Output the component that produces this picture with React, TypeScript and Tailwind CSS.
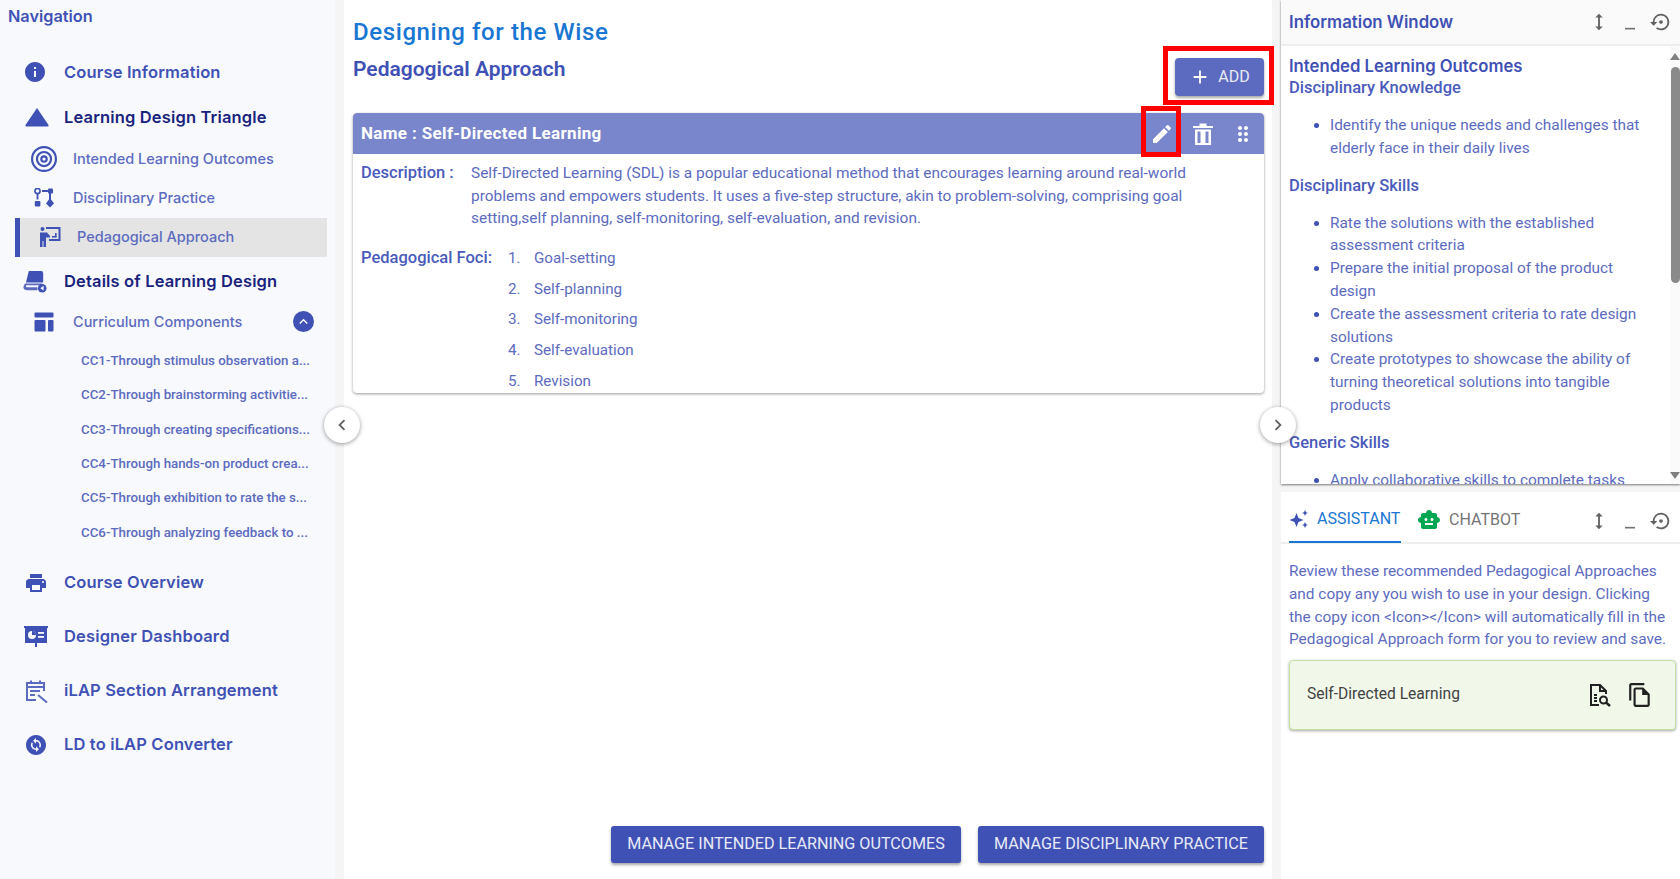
import {
  MdInfo,
  MdPrint,
  MdChangeCircle,
  MdEdit,
  MdDragIndicator,
  MdHeight,
  MdMinimize,
  MdSettingsBackupRestore,
  MdSmartToy,
  MdOutlineFileCopy,
  MdAdd,
  MdExpandLess,
  MdChevronLeft,
  MdChevronRight,
} from "react-icons/md";

const roboto = "font-['Roboto',sans-serif]";
const inter = "font-['Inter',sans-serif]";

function TriangleIcon() {
  return (
    <svg viewBox="0 0 24 20" className="w-6 h-5 fill-[#3f51b5]">
      <path d="M12 1 L23.5 18 Q24 19.5 22.5 19.5 H1.5 Q0 19.5 .5 18 Z" />
    </svg>
  );
}

function TargetIcon() {
  return (
    <svg viewBox="0 0 24 24" className="w-[26px] h-[26px] fill-none stroke-[#3f51b5]" strokeWidth="2">
      <circle cx="12" cy="12" r="11" />
      <circle cx="12" cy="12" r="6.5" />
      <circle cx="12" cy="12" r="2.5" />
    </svg>
  );
}

function PracticeIcon() {
  return (
    <svg viewBox="0 0 20 20" className="w-5 h-5 fill-[#3f51b5]">
      <circle cx="3.5" cy="3" r="2.6" fill="none" stroke="#3f51b5" strokeWidth="1.6" />
      <rect x="2.6" y="5.5" width="1.8" height="6" />
      <rect x="0.8" y="13" width="5.6" height="5.6" rx="1" />
      <rect x="8" y="2" width="8" height="2" />
      <rect x="14" y="0.5" width="5" height="5" rx="1" />
      <rect x="15" y="5" width="2" height="8" />
      <path d="M16 10 L20 15.5 L16 19.5 L12 15.5 Z" />
    </svg>
  );
}

function TeacherIcon() {
  return (
    <svg viewBox="0 0 22 22" className="w-[22px] h-[22px] fill-[#3f51b5]">
      <circle cx="3.5" cy="3" r="2" />
      <path d="M1 6.5 H8 L11 10 V11.5 H7 V21 H4.5 V15 H3.5 V21 H1 Z" />
      <path d="M7 1 H21.5 V15 H10 V13 H19.5 V3 H7 Z" />
      <rect x="13" y="10" width="4.5" height="1.6" />
      <rect x="16" y="7" width="1.6" height="4" />
    </svg>
  );
}

function BooksIcon() {
  return (
    <svg viewBox="0 0 26 24" className="w-[25px] h-[23px] fill-[#3f51b5]">
      <path d="M6 1 H19 Q21 1 21 3 V13 H3 Z" />
      <path d="M2 14 H20 V16 H4 Q3 16 3 17 Q3 18 4 18 H15 V21 H4 Q0 21 .5 17 Z" opacity="0.85" />
      <circle cx="20" cy="19" r="4.5" />
      <path d="M21.5 16.5 L18 19 L21.5 21.5 Z" fill="#f8f9fc" />
    </svg>
  );
}

function ComponentsIcon() {
  return (
    <svg viewBox="0 0 20 20" className="w-5 h-5 fill-[#3f51b5]">
      <rect x="0.5" y="0.5" width="19" height="5" rx="1" />
      <rect x="0.5" y="8" width="11" height="11.5" rx="1" />
      <rect x="14" y="8" width="5.5" height="11.5" rx="1" />
    </svg>
  );
}

function BoardIcon() {
  return (
    <svg viewBox="0 0 24 22" className="w-6 h-[22px] fill-[#3f51b5]">
      <path d="M0 0 H24 V2 H23 V17 H13 V21 H11 V17 H1 V2 H0 Z" />
      <circle cx="8" cy="9" r="4" fill="#f8f9fc" />
      <path d="M8 9 V5 A4 4 0 0 1 12 9 Z" />
      <rect x="14" y="6" width="6" height="1.8" fill="#f8f9fc" />
      <rect x="14" y="10" width="6" height="1.8" fill="#f8f9fc" />
    </svg>
  );
}

function CalendarIcon() {
  return (
    <svg viewBox="0 0 24 24" className="w-6 h-6 fill-none stroke-[#5c6bc0]" strokeWidth="2">
      <path d="M3 8 H20 M12 21 H3 V4 H20 V12" />
      <path d="M7 1.5 V5 M16 1.5 V5" />
      <path d="M6 12 H16 M6 16 H11" />
      <path d="M14 16 L23 23.5" />
    </svg>
  );
}

function TrashIcon() {
  return (
    <svg viewBox="0 0 20 22" className="w-5 h-[22px] fill-white">
      <rect x="0" y="3" width="20" height="2" />
      <rect x="6.5" y="0.5" width="7" height="2.5" />
      <path d="M2 6.5 H18 V22 H2 Z M4.5 8.5 V20 H7.5 V8.5 Z M12.5 8.5 V20 H15.5 V8.5 Z" fillRule="evenodd" />
    </svg>
  );
}

function SparkleIcon() {
  return (
    <svg viewBox="0 0 20 20" className="w-5 h-5 fill-[#3f51b5]">
      <path d="M7.5 4 L9.5 9 L14.5 11 L9.5 13 L7.5 18 L5.5 13 L.5 11 L5.5 9 Z" />
      <path d="M16 1 L17 3.2 L19 4 L17 4.8 L16 7 L15 4.8 L13 4 L15 3.2 Z" />
      <path d="M16 13 L17 15.2 L19 16 L17 16.8 L16 19 L15 16.8 L13 16 L15 15.2 Z" />
    </svg>
  );
}

// page with three text lines and a magnifier in its lower corner
function PageSearchIcon() {
  return (
    <svg viewBox="0 0 24 24" className="w-[24px] h-[24px] fill-none stroke-[#212121]" strokeWidth="2">
      <path d="M11 22 H3 V2 H12 L18 8 V11" />
      <path d="M12 2 V8 H18" />
      <path d="M6 12 H9 M6 15 H9 M6 18 H9" />
      <circle cx="15.5" cy="17" r="3.5" />
      <path d="M18 19.5 L22 23" strokeWidth="2.4" />
    </svg>
  );
}

function WindowControls() {
  return (
    <div className="flex items-center text-[#616161]">
      <MdHeight className="w-[22px] h-[22px]" />
      <MdMinimize className="w-[20px] h-[20px] ml-[10px] text-[#757575]" />
      <MdSettingsBackupRestore className="w-[22px] h-[22px] ml-[10px]" />
    </div>
  );
}

const children = [
  "CC1-Through stimulus observation a...",
  "CC2-Through brainstorming activitie...",
  "CC3-Through creating specifications...",
  "CC4-Through hands-on product crea...",
  "CC5-Through exhibition to rate the s...",
  "CC6-Through analyzing feedback to ...",
];

const bottomLinks = [
  { label: "Course Overview", icon: <MdPrint className="w-6 h-6 text-[#3f51b5]" /> },
  { label: "Designer Dashboard", icon: <BoardIcon /> },
  { label: "iLAP Section Arrangement", icon: <CalendarIcon /> },
  { label: "LD to iLAP Converter", icon: <MdChangeCircle className="w-6 h-6 text-[#3f51b5]" /> },
];

const foci = ["Goal-setting", "Self-planning", "Self-monitoring", "Self-evaluation", "Revision"];

const skills = [
  "Rate the solutions with the established assessment criteria",
  "Prepare the initial proposal of the product design",
  "Create the assessment criteria to rate design solutions",
  "Create prototypes to showcase the ability of turning theoretical solutions into tangible products",
];

function Sidebar() {
  return (
    <aside className={`w-[335px] shrink-0 h-full bg-[#f8f9fc] ${inter}`}>
      <div className="h-[33px] pl-[8px] flex items-center text-[16.3px] font-semibold text-[#3f51b5]">Navigation</div>
      <div className="h-[16.5px]" />
      <div className="h-[45px] flex items-center text-[16.5px] tracking-[0.15px] font-semibold text-[#3f51b5] pl-[24px]">
        <span className="w-[40px]"><MdInfo className="w-6 h-6 -ml-[1px]" /></span>Course Information
      </div>
      <div className="h-[45px] flex items-center text-[16.5px] tracking-[0.15px] font-semibold text-[#1a237e] pl-[25px]">
        <span className="w-[39px]"><TriangleIcon /></span>Learning Design Triangle
      </div>
      <div className="h-[39px] flex items-center text-[14.5px] font-medium text-[#5c6bc0] pl-[31px]">
        <span className="w-[42px]"><TargetIcon /></span>Intended Learning Outcomes
      </div>
      <div className="h-[39px] flex items-center text-[14.5px] font-medium text-[#5c6bc0] pl-[34px]">
        <span className="w-[39px]"><PracticeIcon /></span>Disciplinary Practice
      </div>
      <div className="h-[39px] ml-[15px] mr-[8px] flex items-center text-[14.5px] font-medium text-[#5c6bc0] pl-[19px] bg-[#e4e4e4] border-l-[5px] border-[#3f51b5]">
        <span className="w-[38px]"><TeacherIcon /></span>Pedagogical Approach
      </div>
      <div className="h-[46px] pt-[3px] flex items-center text-[16.5px] tracking-[0.15px] font-semibold text-[#1a237e] pl-[23px]">
        <span className="w-[41px]"><BooksIcon /></span>Details of Learning Design
      </div>
      <div className="h-[38px] flex items-center text-[14.5px] font-medium text-[#5c6bc0] pl-[34px] pr-[21px]">
        <span className="w-[39px]"><ComponentsIcon /></span>Curriculum Components
        <span className="ml-auto w-[21px] h-[21px] rounded-full bg-[#3f51b5] flex items-center justify-center">
          <MdExpandLess className="w-[17px] h-[17px] text-white" />
        </span>
      </div>
      <div className={`pl-[81px] pt-[3px] pr-[20px] ${roboto}`}>
        {children.map((c) => (
          <div key={c} className="h-[34.4px] flex items-center text-[13.3px] font-medium text-[#5c6bc0] whitespace-nowrap">{c}</div>
        ))}
      </div>
      <div className="h-[6px]" />
      {bottomLinks.map((l) => (
        <div key={l.label} className="h-[54px] flex items-center text-[16.5px] tracking-[0.15px] font-semibold text-[#3f51b5] pl-[24px]">
          <span className="w-[40px]">{l.icon}</span>{l.label}
        </div>
      ))}
    </aside>
  );
}

function MainPanel() {
  return (
    <main className={`flex-1 min-w-0 h-full bg-white pl-[9px] pr-[8px] flex flex-col ${roboto}`}>
      <div className="h-[113px] flex justify-between shrink-0">
        <div>
          <h1 className="mt-[15px] text-[24px] leading-[34px] font-medium text-[#1976d2] tracking-[0.6px]">Designing for the Wise</h1>
          <h2 className="mt-[5px] text-[21px] leading-[30px] font-semibold text-[#3f51b5]">Pedagogical Approach</h2>
        </div>
        <div className="relative mt-[58px] h-[38px]">
          <button className="w-[89px] h-[38px] rounded bg-[#5c6bc0] text-[#e8eaf6] text-[16px] flex items-center justify-center gap-[7px] shadow-[0_2px_3px_rgba(0,0,0,0.35)]">
            <MdAdd className="w-[22px] h-[22px] text-white" />ADD
          </button>
          <div className="absolute -left-[12px] -top-[12px] w-[111px] h-[59px] border-[5px] border-[#ff0000]" />
        </div>
      </div>

      <section className="rounded shadow-[0_1px_3px_rgba(0,0,0,0.4)] shrink-0 h-[280px] overflow-hidden">
        <div className="relative h-[41px] bg-[#7986cb] rounded-t flex items-center pl-[8px] pr-[9px]">
          <span className="text-[17px] tracking-[0.35px] font-bold text-white">Name : Self-Directed Learning</span>
          <div className="ml-auto flex items-center text-white">
            <MdEdit className="w-[24px] h-[24px]" />
            <span className="ml-[19px]"><TrashIcon /></span>
            <MdDragIndicator className="w-[24px] h-[24px] ml-[18px]" />
          </div>
        </div>
        <div className="flex pl-[8px] pt-[8px] text-[15.45px] leading-[22.6px] text-[#5c6bc0]">
          <span className="w-[110px] shrink-0 text-[16.5px] font-medium text-[#4a5bbb]">Description :</span>
          <p className="w-[735px]">
            Self-Directed Learning (SDL) is a popular educational method that encourages learning around real-world problems and empowers students. It uses a five-step structure, akin to problem-solving, comprising goal setting,self planning, self-monitoring, self-evaluation, and revision.
          </p>
        </div>
        <div className="flex pl-[8px] pt-[17px] text-[15.2px] text-[#5c6bc0]">
          <span className="w-[147px] shrink-0 text-[16.5px] font-medium text-[#4a5bbb] leading-[22px]">Pedagogical Foci:</span>
          <ol>
            {foci.map((f, i) => (
              <li key={f} className="h-[30.8px] leading-[22px] flex">
                <span className="w-[26px]">{i + 1}.</span>{f}
              </li>
            ))}
          </ol>
        </div>
      </section>

      <div className="flex-1" />
      <div className="flex justify-end gap-[17px] pb-[16px]">
        <button className="w-[350px] h-[37px] rounded-[3px] bg-[#3f51b5] text-[#e8eaf6] text-[16.15px] shadow-[0_2px_3px_rgba(0,0,0,0.35)]">MANAGE INTENDED LEARNING OUTCOMES</button>
        <button className="w-[286px] h-[37px] rounded-[3px] bg-[#3f51b5] text-[#e8eaf6] text-[16.15px] shadow-[0_2px_3px_rgba(0,0,0,0.35)]">MANAGE DISCIPLINARY PRACTICE</button>
      </div>
    </main>
  );
}

function InfoWindow() {
  return (
    <div className="h-[484px] bg-white shadow-[0_1px_2px_rgba(0,0,0,0.5)] flex flex-col shrink-0">
      <div className="h-[46px] shrink-0 bg-[#fafafa] border-b-2 border-[#eeeeee] flex items-center justify-between pl-[8px] pr-[8px]">
        <span className={`pt-[2px] text-[16.8px] font-semibold text-[#3f51b5] ${inter}`}>Information Window</span>
        <WindowControls />
      </div>
      <div className="flex-1 min-h-0 flex">
        <div className="flex-1 min-w-0 overflow-hidden pl-[8px] pr-[18px]">
          <h3 className={`mt-[10px] text-[16.7px] leading-[21px] font-semibold text-[#3f51b5] ${inter}`}>Intended Learning Outcomes</h3>
          <h4 className="text-[16.5px] leading-[21px] font-medium text-[#4a5bbb]">Disciplinary Knowledge</h4>
          <ul className="mt-[16px] list-disc pl-[41px] text-[15.4px] leading-[22.8px] text-[#5c6bc0] marker:text-[#3f51b5]">
            <li>Identify the unique needs and challenges that elderly face in their daily lives</li>
          </ul>
          <h4 className="mt-[15px] text-[16.5px] leading-[22px] font-medium text-[#4a5bbb]">Disciplinary Skills</h4>
          <ul className="mt-[15px] list-disc pl-[41px] text-[15.4px] leading-[22.8px] text-[#5c6bc0] marker:text-[#3f51b5]">
            {skills.map((s) => <li key={s}>{s}</li>)}
          </ul>
          <h4 className="mt-[15px] text-[16.5px] leading-[22px] font-medium text-[#4a5bbb]">Generic Skills</h4>
          <ul className="mt-[15px] list-disc pl-[41px] text-[15.4px] leading-[22.8px] text-[#5c6bc0] marker:text-[#3f51b5]">
            <li>Apply collaborative skills to complete tasks</li>
          </ul>
        </div>
        <div className="w-[10px] shrink-0 flex flex-col items-center pt-[7px] pb-[5px] bg-[#fafafa]">
          <svg viewBox="0 0 10 7" className="w-[10px] h-[7px] shrink-0 fill-[#808080]"><path d="M5 0 L10 7 H0 Z" /></svg>
          <div className="w-[9px] h-[216px] rounded-full bg-[#8a8a8a] mt-[7px]" />
          <div className="flex-1" />
          <svg viewBox="0 0 10 7" className="w-[10px] h-[7px] shrink-0 fill-[#808080]"><path d="M0 0 H10 L5 7 Z" /></svg>
        </div>
      </div>
    </div>
  );
}

function AssistantWindow() {
  return (
    <div className="flex-1 bg-white mt-[8px] flex flex-col min-h-0">
      <div className="h-[52px] shrink-0 border-b-2 border-[#eeeeee] flex items-start justify-between pl-[8px] pr-[8px]">
        <div className="flex h-[52px]">
          <div className="w-[112px] h-[51px] pt-[5px] flex items-center gap-[8px] border-b-2 border-[#1976d2] text-[#1976d2] text-[16px]">
            <SparkleIcon />ASSISTANT
          </div>
          <div className="ml-[16px] h-[51px] pt-[5px] flex items-center gap-[8px] text-[#757575] text-[16px]">
            <MdSmartToy className="w-6 h-6 text-[#00a651]" />CHATBOT
          </div>
        </div>
        <div className="mt-[18px]"><WindowControls /></div>
      </div>
      <p className="px-[8px] pt-[16px] text-[15.4px] leading-[22.8px] text-[#5c6bc0]">
        Review these recommended Pedagogical Approaches and copy any you wish to use in your design. Clicking the copy icon &lt;Icon&gt;&lt;/Icon&gt; will automatically fill in the Pedagogical Approach form for you to review and save.
      </p>
      <div className="ml-[8px] mr-[4px] mt-[9px] h-[70px] rounded bg-[#f1f8e9] border border-[#c5e1a5] shadow-[0_1px_3px_rgba(0,0,0,0.35)] flex items-center pl-[17px] pr-[22px] text-[15.6px] text-[#424242]">
        Self-Directed Learning
        <span className="ml-auto"><PageSearchIcon /></span>
        <MdOutlineFileCopy className="ml-[15px] w-[26px] h-[26px] text-[#212121]" />
      </div>
    </div>
  );
}

export default function App() {
  return (
    <div className={`relative w-[1680px] h-[879px] overflow-hidden flex bg-[#f5f5f5] ${roboto}`}>
      <Sidebar />
      <div className="w-[9px] shrink-0" />
      <MainPanel />
      <div className="w-[9px] shrink-0" />
      <div className="w-[399px] shrink-0 h-full flex flex-col">
        <InfoWindow />
        <AssistantWindow />
      </div>
      {/* collapse toggles sit over the gutters */}
      <button className="absolute left-[324px] top-[407px] w-[36px] h-[36px] rounded-full bg-white shadow-[0_1px_4px_rgba(0,0,0,0.4)] flex items-center justify-center text-[#616161]">
        <MdChevronLeft className="w-[22px] h-[22px]" />
      </button>
      <button className="absolute left-[1260px] top-[407px] w-[36px] h-[36px] rounded-full bg-white shadow-[0_1px_4px_rgba(0,0,0,0.4)] flex items-center justify-center text-[#616161]">
        <MdChevronRight className="w-[22px] h-[22px]" />
      </button>
      {/* red highlight around the edit action */}
      <div className="absolute left-[1141px] top-[106px] w-[40px] h-[51px] border-[5px] border-[#ff0000]" />
    </div>
  );
}
